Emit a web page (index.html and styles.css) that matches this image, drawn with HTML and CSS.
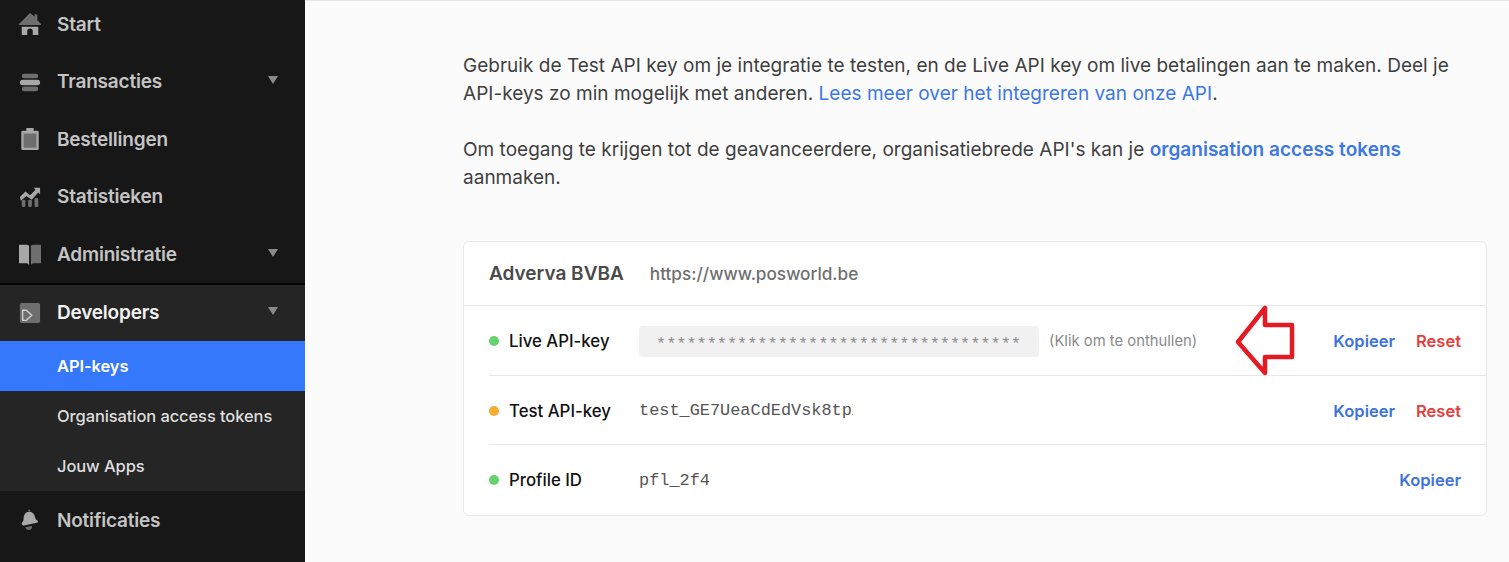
FILE: index.html
```html
<!DOCTYPE html>
<html lang="nl">
<head>
  <meta charset="UTF-8" />
  <meta name="viewport" content="width=device-width, initial-scale=1.0" />
  <title>API-keys</title>
  <link rel="stylesheet" href="styles.css">
</head>
<body>

  <aside class="sidebar">
    <ul class="menu">
      <li class="menu-item">
        <svg class="menu-icon" viewBox="0 0 24 24"><path d="M0 12 12 0l5 4V1l3 1v6l4 4v1H0z"/><path d="M3 15h18v9h-6v-4a3 3 0 0 0-6 0v4H3z" fill="#a8a8a8"/></svg>
        <span>Start</span>
      </li>
      <li class="menu-item">
        <svg class="menu-icon" viewBox="0 0 24 24"><rect x="3" y="3" width="18" height="5" rx="2.500"/><rect x="1" y="9.500" width="22" height="6" rx="3" fill="#a8a8a8"/><rect x="3" y="17" width="18" height="5" rx="2.500"/></svg>
        <span>Transacties</span>
        <i class="caret"></i>
      </li>
      <li class="menu-item">
        <svg class="menu-icon" viewBox="0 0 24 24"><path d="M4 3h4V0h8v3h4a1.500 1.500 0 0 1 1.500 1.500v18A1.500 1.500 0 0 1 20 24H4a1.500 1.500 0 0 1-1.500-1.500v-18A1.500 1.500 0 0 1 4 3z" fill="#a8a8a8"/><rect x="5" y="6" width="14" height="15.500" fill="#6e6e6e"/></svg>
        <span>Bestellingen</span>
      </li>
      <li class="menu-item">
        <svg class="menu-icon" viewBox="0 0 24 24"><path d="M1 12 7 6l5 4 6-6-2-2h7v7l-2-2-7 8-6-4-6 5z" fill="#a8a8a8"/><rect x="3" y="15" width="4" height="8" rx="1.500"/><rect x="10" y="15" width="4" height="8" rx="1.500"/><rect x="17" y="13" width="4" height="10" rx="1.500"/></svg>
        <span>Statistieken</span>
      </li>
      <li class="menu-item">
        <svg class="menu-icon" viewBox="0 0 24 24"><path d="M0 2h9l2 1v21l-2-2H0z" fill="#a8a8a8"/><path d="M24 2h-9l-2 1v21l2-2h9z"/></svg>
        <span>Administratie</span>
        <i class="caret"></i>
      </li>
    </ul>

    <div class="menu-open">
      <div class="menu-item menu-item-open">
        <svg class="menu-icon" viewBox="0 0 24 24"><rect x="1" y="1" width="22" height="22" rx="2" fill="#6e6e6e"/><path d="M4 9h4l6 5.500-6 5.500H4z" fill="none" stroke="#d0d0d0" stroke-width="1.500" stroke-linejoin="round"/></svg>
        <span>Developers</span>
        <i class="caret"></i>
      </div>
      <a class="submenu-item submenu-active">API-keys</a>
      <a class="submenu-item">Organisation access tokens</a>
      <a class="submenu-item">Jouw Apps</a>
    </div>

    <ul class="menu">
      <li class="menu-item">
        <svg class="menu-icon" viewBox="0 0 24 24"><circle cx="11" cy="1.500" r="1" fill="#6e6e6e"/><path d="M11 3c4 0 6 3 6.500 6 .3 2 2 3 3 4 .5.800 0 1.500-1 2l-14 3c-1.500 0-2.500-1-2.500-2 0-1.500 2-2 2-5 0-5 2.500-8 6-8z" fill="#a8a8a8"/><path d="M7 20l7-1.500a3.500 3.500 0 0 1-7 1.500z"/></svg>
        <span>Notificaties</span>
      </li>
    </ul>
  </aside>

  <main class="content">
    <p class="intro">Gebruik de Test API key om je integratie te testen, en de Live API key om live betalingen aan te maken. Deel je API-keys zo min mogelijk met anderen. <a class="link">Lees meer over het integreren van onze API</a>.</p>
    <p class="intro">Om toegang te krijgen tot de geavanceerdere, organisatiebrede API's kan je <a class="link link-strong">organisation access tokens</a> aanmaken.</p>

    <section class="card">
      <header class="card-header">
        <h2>Adverva BVBA</h2>
        <span class="site-url">https://www.posworld.be</span>
      </header>

      <div class="key-row">
        <span class="key-name"><i class="dot dot-green"></i>Live API-key</span>
        <span class="key-hidden">************************************</span>
        <span class="key-hint">(Klik om te onthullen)</span>
        <span class="key-actions"><a class="copy">Kopieer</a><a class="reset">Reset</a></span>
      </div>
      <div class="key-row">
        <span class="key-name"><i class="dot dot-orange"></i>Test API-key</span>
        <span class="key-value key-test">test_GE7UeaCdEdVsk8tpXq</span>
        <span class="key-actions"><a class="copy">Kopieer</a><a class="reset">Reset</a></span>
      </div>
      <div class="key-row">
        <span class="key-name"><i class="dot dot-green"></i>Profile ID</span>
        <span class="key-value key-profile">pfl_2f4</span>
        <span class="key-actions"><a class="copy">Kopieer</a></span>
      </div>

      <!-- red arrow drawn on top of the screenshot -->
      <svg class="arrow" viewBox="0 0 60 74">
        <path d="M3 38 30 4v17h27v32H30v16z" fill="none" stroke="#e41b23" stroke-width="4.500" stroke-linejoin="round"/>
      </svg>
    </section>
  </main>

</body>
</html>
```

FILE: styles.css
```css
html, body {
  height: 100%;
}
body {
  font-family: 'Inter', 'Liberation Sans', sans-serif;
  margin: 0;
  background-color: #fbfbfb;
  color: #3c3c3c;
  display: flex;
  overflow: hidden;
}

/* sidebar */
.sidebar {
  width: 305px;
  flex-shrink: 0;
  background-color: #171717;
  overflow: hidden;
}
.menu {
  list-style: none;
  margin: 0;
  padding: 0;
}
.sidebar > .menu:first-child {
  margin-top: -4.500px;
}
.menu-item {
  height: 57.500px;
  display: flex;
  align-items: center;
  padding: 0 27px 0 19px;
  box-sizing: border-box;
  color: #c4c4c4;
  font-size: 19px;
  font-weight: 600;
  letter-spacing: -0.2px;
}
.menu-open + .menu .menu-item {
  padding-top: 2px;
}
.menu-icon {
  width: 22px;
  height: 22px;
  margin-right: 16px;
  flex-shrink: 0;
  fill: #6e6e6e;
}
.caret {
  margin-left: auto;
  border-left: 5px solid transparent;
  border-right: 5px solid transparent;
  border-top: 8px solid #8a8a8a;
  margin-top: -3px;
}

.menu-open {
  background-color: #252525;
  border-top: 2px solid #050505;
}
.menu-item-open {
  height: 55.500px;
  color: #f2f2f2;
}
.submenu-item {
  display: flex;
  align-items: center;
  height: 50px;
  padding-left: 57px;
  color: #dedede;
  font-size: 16.500px;
  font-weight: 500;
  letter-spacing: -0.1px;
}
.submenu-active {
  background-color: #3578fb;
  color: #fff;
  font-weight: 600;
}

/* main */
.content {
  flex: 1;
  border-top: 1px solid #e8e8e8;
  padding: 51px 22px 0 158px;
}
.intro {
  margin: 0 0 28px;
  max-width: 1000px;
  font-size: 19px;
  line-height: 28px;
  letter-spacing: 0.02px;
  color: #3f3f3f;
}
.link {
  color: #3b78e0;
}
.link-strong {
  font-weight: 600;
}

.card {
  position: relative;
  margin-top: 49px;
  background-color: #fff;
  border: 1px solid #e8e8e8;
  border-radius: 6px;
}
.card-header {
  display: flex;
  align-items: center;
  height: 63px;
  padding: 0 25px;
  border-bottom: 1px solid #e8e8e8;
}
.card-header h2 {
  margin: 0 26px 0 0;
  font-size: 19px;
  font-weight: 600;
  color: #4a4a4a;
}
.site-url {
  font-size: 17.200px;
  font-weight: 500;
  color: #6f6f6f;
}

.key-row {
  display: flex;
  align-items: center;
  box-sizing: border-box;
  height: 69.500px;
  margin-left: 25px;
  padding: 2px 25px 0 0;
  border-bottom: 1px solid #e8e8e8;
}
.key-row:last-of-type {
  height: 70px;
  padding-top: 0;
  border-bottom: 0;
}
.key-name {
  display: flex;
  align-items: center;
  width: 150px;
  flex-shrink: 0;
  font-size: 16.800px;
  font-weight: 500;
  color: #111;
}
.dot {
  width: 10px;
  height: 10px;
  border-radius: 50%;
  margin-right: 10px;
}
.dot-green {
  background-color: #64d36b;
}
.dot-orange {
  background-color: #f7ac32;
}
.key-hidden, .key-value {
  font-family: 'Liberation Mono', monospace;
  font-size: 16.900px;
  overflow: hidden;
  white-space: nowrap;
}
.key-hidden {
  width: 400px;
  height: 31px;
  line-height: 38px;
  box-sizing: border-box;
  padding-left: 17px;
  background-color: #f1f1f1;
  border-radius: 4px;
  color: #8c8c8c;
}
.key-value {
  color: #555;
}
.key-test {
  width: 214px;
}
.key-profile {
  width: 71px;
}
.key-hint {
  margin-left: 10px;
  font-size: 14.800px;
  color: #8a8a8a;
}
.key-actions {
  margin-left: auto;
  display: flex;
  gap: 21px;
  font-size: 16.500px;
  font-weight: 600;
}
.copy {
  color: #3f73dc;
}
.reset {
  color: #e5403b;
}

.arrow {
  position: absolute;
  left: 771px;
  top: 62px;
  width: 60px;
  height: 74px;
}
```
